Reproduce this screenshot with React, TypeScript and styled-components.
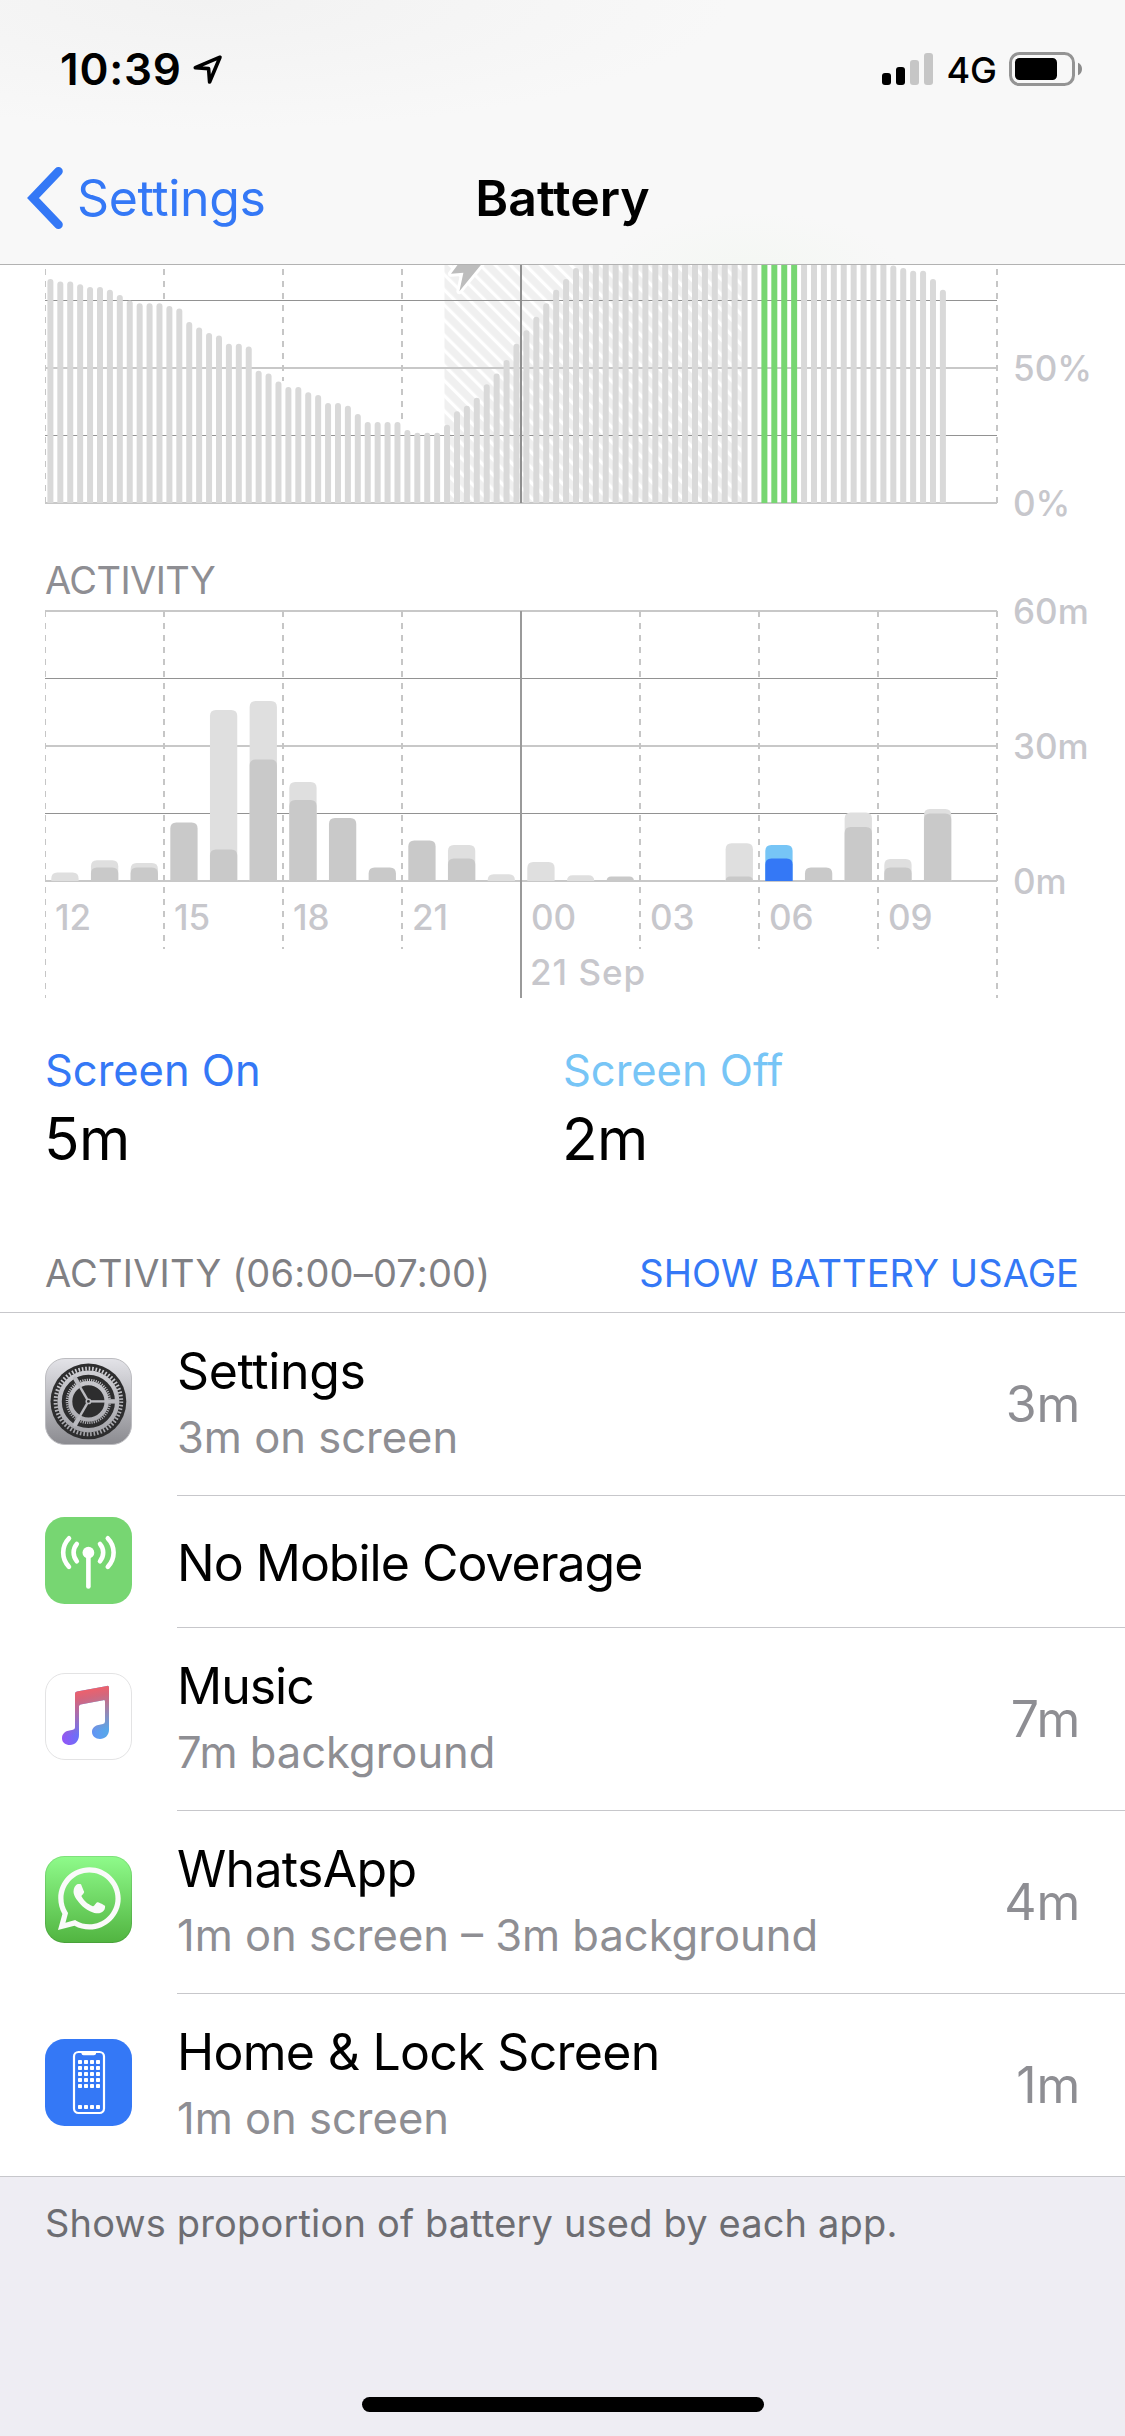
import React from 'react';
import styled, { createGlobalStyle } from 'styled-components';
import { FaWhatsapp } from 'react-icons/fa';

const BLUE = '#3478f6';
const SKY = '#77c5f6';
const GREEN = '#77d672';
const LABEL = '#c7c7cc';
const GREY = '#8e8e93';
const SEPARATOR = '#c7c7cb';

const GlobalStyle = createGlobalStyle`
  *, *::before, *::after { box-sizing: border-box; }
  body {
    margin: 0;
    background: #eeedf3;
    font-family: Inter, "Liberation Sans", sans-serif;
  }
`;

const Screen = styled.main`
  display: flex;
  flex-direction: column;
  width: 1125px;
  height: 2436px;
  overflow: hidden;
  color: #000;
  background: #eeedf3;
`;

/* ---------- Header ---------- */

const Header = styled.header`
  flex: none;
  height: 265px;
  border-bottom: 1px solid #b2b2b2;
  background:
    radial-gradient(ellipse 150px 60px at 752px 272px, #f4f7f3, transparent),
    radial-gradient(ellipse 520px 130px at 210px 0px, #f2f2f2, transparent),
    #f8f8f8;
`;

const StatusBar = styled.div`
  display: flex;
  align-items: center;
  justify-content: space-between;
  height: 132px;
  padding: 6px 43px 0 60px;
`;

const StatusGroup = styled.div`
  display: flex;
  align-items: center;
`;

const Clock = styled.span`
  font-size: 44px;
  font-weight: 600;
  line-height: 52px;
  letter-spacing: 0.8px;
  margin-right: 10px;
`;

const Network = styled.span`
  font-size: 36px;
  font-weight: 450;
  line-height: 44px;
  margin: 2px 12px 0 13px;
`;

const Signal = styled.div`
  display: flex;
  align-items: flex-end;
  gap: 5px;
  height: 32px;
`;

const SignalBar = styled.i<{ $height: number; $on: boolean }>`
  width: 9px;
  height: ${(p) => p.$height}px;
  border-radius: 3px;
  background: ${(p) => (p.$on ? '#000' : '#c6c6c6')};
`;

const NavBar = styled.nav`
  display: grid;
  grid-template-columns: 1fr auto 1fr;
  align-items: center;
  height: 132px;
  padding: 0 26px;
`;

const BackButton = styled.button`
  display: flex;
  align-items: center;
  gap: 13px;
  padding: 0;
  border: 0;
  background: none;
  color: ${BLUE};
  font: 400 50px/60px Inter, "Liberation Sans", sans-serif;
  letter-spacing: -0.35px;
`;

const NavTitle = styled.h1`
  margin: 0;
  font-size: 50px;
  font-weight: 600;
  line-height: 60px;
`;

/* ---------- Charts ---------- */

const Panel = styled.section`
  flex: none;
  height: 1047px;
  padding-left: 45px;
  background: #fff;
`;

const ChartRow = styled.div`
  display: flex;
  gap: 15px;
`;

const Plot = styled.svg`
  display: block;
  flex: none;
`;

const Scale = styled.div<{ $top: number; $height: number }>`
  display: flex;
  flex-direction: column;
  justify-content: space-between;
  height: ${(p) => p.$height}px;
  margin-top: ${(p) => p.$top}px;
  color: ${LABEL};
  font-size: 35px;
  font-weight: 450;
  line-height: 44px;
`;

const ChartTitle = styled.h2`
  margin: 32px 0 0;
  color: ${GREY};
  font-size: 38px;
  font-weight: 400;
  line-height: 46px;
  letter-spacing: -0.6px;
`;

const PlotStack = styled.div`
  display: grid;
  > * { grid-area: 1 / 1; }
`;

const TimeAxis = styled.div`
  padding-top: 292px;
  color: ${LABEL};
  font-size: 35px;
  font-weight: 450;
  line-height: 44px;
`;

const Hours = styled.div`
  display: grid;
  grid-template-columns: repeat(8, 119px);
`;

const Hour = styled.span`
  padding-left: 10px;
`;

const Day = styled.div`
  margin: 11px 0 0 485px;
  letter-spacing: 1px;
`;

const Legend = styled.div`
  display: grid;
  grid-template-columns: 518px 1fr;
  margin-top: 46px;
`;

const LegendName = styled.div<{ $color: string }>`
  color: ${(p) => p.$color};
  font-size: 43.5px;
  line-height: 52px;
  letter-spacing: -0.05px;
`;

const LegendValue = styled.div`
  margin: 8px 0 0 -1px;
  font-size: 58.5px;
  line-height: 70px;
  letter-spacing: -0.6px;
`;

const ListHeader = styled.div`
  display: flex;
  justify-content: space-between;
  margin-top: 75px;
  padding: 0 46px 0 0;
  font-size: 38px;
  line-height: 48px;
  letter-spacing: 0.19px;
  color: #808084;
`;

const Toggle = styled.span`
  color: ${BLUE};
  letter-spacing: 0.08px;
`;

/* ---------- App list ---------- */

const List = styled.ul`
  flex: none;
  margin: 0;
  padding: 0;
  list-style: none;
  background: #fff;
  border-top: 1px solid ${SEPARATOR};
  border-bottom: 1px solid ${SEPARATOR};
`;

const Row = styled.li<{ $compact: boolean }>`
  display: flex;
  height: ${(p) => (p.$compact ? 132 : 183)}px;
  padding-left: 45px;
  &:last-child { height: 182px; }
`;

const IconSlot = styled.div<{ $compact: boolean }>`
  flex: none;
  width: 132px;
  padding-top: ${(p) => (p.$compact ? 21 : 45)}px;
`;

const RowBody = styled.div`
  display: flex;
  flex: 1;
  align-items: center;
  justify-content: space-between;
  padding-right: 45px;
  border-bottom: 1px solid ${SEPARATOR};
  ${Row}:last-child & { border-bottom: 0; }
`;

const RowText = styled.div<{ $compact: boolean }>`
  display: flex;
  flex-direction: column;
  gap: 10px;
  ${(p) => (p.$compact ? 'padding-top: 2px' : 'padding-bottom: 4px')};
`;

const AppName = styled.span<{ $tracking: number }>`
  font-size: 50px;
  line-height: 60px;
  letter-spacing: ${(p) => p.$tracking}px;
`;

const AppDetail = styled.span`
  color: ${GREY};
  font-size: 43.5px;
  line-height: 52px;
`;

const AppTime = styled.span`
  color: ${GREY};
  font-size: 50px;
  line-height: 60px;
  letter-spacing: -0.2px;
`;

const Footnote = styled.p`
  margin: 22px 0 0;
  padding-left: 45px;
  color: #6d6d72;
  font-size: 38px;
  line-height: 48px;
  letter-spacing: 0.17px;
`;

const HomeIndicator = styled.div`
  width: 402px;
  height: 15px;
  margin: auto auto 24px;
  border-radius: 8px;
  background: #000;
`;

/* ---------- Data ---------- */

const LEVELS = [
  83, 82, 82, 81, 80, 80, 79, 77, 75, 74, 74, 74, 73, 72, 67, 65, 63, 62, 59, 59, 58, 49, 48, 45,
  43, 43, 41, 40, 37, 37, 36, 33, 30, 30, 30, 30, 27, 26, 26, 26, 29, 34, 36, 39, 44, 48, 53, 59,
  64, 69, 74, 79, 83, 87, 91, 94, 96, 98, 99, 100, 100, 100, 100, 100, 100, 100, 100, 100, 100,
  100, 100, 100, 100, 100, 100, 100, 99, 98, 96, 95, 93, 92, 91, 90, 89, 88, 87, 86, 86, 83, 79,
];

/* [minutes in total, minutes with the screen on] for each hour from 12:00 */
const ACTIVITY: [number, number][] = [
  [1.9, 0], [4.6, 3], [4, 3], [13, 13], [38, 7], [40, 27], [22, 18], [14, 14], [3, 3], [9, 9],
  [8, 5], [1.5, 0], [4.2, 0], [1.3, 0], [1, 1], [0, 0], [0, 0], [8.4, 1], [8, 5], [3, 3],
  [15.2, 12], [4.9, 3], [16, 15],
];

const HOURS = ['12', '15', '18', '21', '00', '03', '06', '09'];
const PLOT_WIDTH = 953;
const QUARTER = 119 / 12;
const HOUR_WIDTH = 119 / 3;
const SELECTED_HOUR = 18;

const levelTop = (percent: number) => 238 - percent * 2.7;

/* How far each three-hour tick is visible above the level bars. */
const LEVEL_TICKS = [
  { x: 0.5, width: 1, end: 238 },
  { x: 119, width: 2, end: 34 },
  { x: 238, width: 2, end: 116 },
  { x: 357, width: 2, end: 154 },
  { x: 952, width: 2, end: 238 },
];

const roundedTop = (x: number, y: number, w: number, bottom: number, radius: number) => {
  const r = Math.min(radius, bottom - y);
  return `M${x} ${bottom}V${y + r}Q${x} ${y} ${x + r} ${y}H${x + w - r}Q${x + w} ${y} ${x + w} ${y + r}V${bottom}Z`;
};

const GridLines = ({ rows }: { rows: { y: number; major: boolean }[] }) => (
  <g>
    {rows.map((r) => (
      <rect key={r.y} x="0" y={r.y} width={PLOT_WIDTH - 1} height={r.major ? 2 : 1} fill={r.major ? '#c8c8c8' : '#929292'} />
    ))}
  </g>
);

const BOLT = 'M414 -2L406 8.8L418.4 7.8L414.4 26.2L437.5 -2Z';

const LevelChart = () => (
  <Plot width={PLOT_WIDTH} height={260} viewBox={`0 0 ${PLOT_WIDTH} 260`}>
    <defs>
      <pattern id="charging" width="10.7" height="10.7" patternUnits="userSpaceOnUse" patternTransform="translate(400 48.3) rotate(45)">
        <rect width="10.7" height="10.7" fill="#f0f0f0" />
        <rect y="3.6" width="10.7" height="3.3" fill="#fff" />
      </pattern>
    </defs>
    <rect x="399.5" y="0" width="297" height="238" fill="url(#charging)" />
    <GridLines rows={[{ y: 35, major: false }, { y: 102, major: true }, { y: 170, major: false }, { y: 237, major: true }]} />
    {LEVEL_TICKS.map((t) => (
      <line key={t.x} x1={t.x} x2={t.x} y1="4" y2={t.end} stroke="#c6c6c6" strokeWidth={t.width} strokeDasharray="6 6" />
    ))}
    <rect x="475" y="0" width="2" height="238" fill="#8f8f8f" />
    {LEVELS.map((level, i) => (
      <path
        key={i}
        d={roundedTop(2.4 + i * QUARTER, levelTop(level), 6, 238, 3)}
        fill={i >= 72 && i < 76 ? GREEN : '#d9d9d9'}
      />
    ))}
    <path d={BOLT} fill="#fff" stroke="#fff" strokeWidth="6" strokeLinejoin="round" />
    <path d={BOLT} fill="#bdbdbd" />
  </Plot>
);

const ActivityChart = () => (
  <Plot width={PLOT_WIDTH} height={395} viewBox={`0 0 ${PLOT_WIDTH} 395`}>
    <GridLines
      rows={[
        { y: 7, major: true },
        { y: 75, major: false },
        { y: 142, major: true },
        { y: 210, major: false },
        { y: 277, major: true },
      ]}
    />
    {HOURS.concat('end').map((h, i) => {
      const edge = i === 0 || i === 8;
      return i === 4 ? (
        <rect key={h} x="475" y="8" width="2" height="387" fill="#9a9a9a" />
      ) : (
        <line
          key={h}
          x1={i === 0 ? 0.5 : i * 119}
          x2={i === 0 ? 0.5 : i * 119}
          y1="8"
          y2={edge ? 395 : 346}
          stroke="#c6c6c6"
          strokeWidth={i === 0 ? 1 : 2}
          strokeDasharray="6 6"
        />
      );
    })}
    {ACTIVITY.map(([total, on], i) => {
      const x = 6.3 + i * HOUR_WIDTH;
      const selected = i === SELECTED_HOUR;
      return (
        <g key={i}>
          {total > on && <path d={roundedTop(x, 278 - total * 4.5, 27.3, 278, 6)} fill={selected ? SKY : '#dfdfdf'} />}
          {on > 0 && <path d={roundedTop(x, 278 - on * 4.5, 27.3, 278, 6)} fill={selected ? BLUE : '#c9c9c9'} />}
        </g>
      );
    })}
  </Plot>
);

/* ---------- Icons ---------- */

const IconSvg = styled.svg`
  display: block;
  width: 87px;
  height: 87px;
`;

const SettingsIcon = () => (
  <IconSvg viewBox="0 0 87 87">
    <defs>
      <linearGradient id="steel" x1="0" y1="0" x2="0" y2="1">
        <stop offset="0" stopColor="#e3e3e8" />
        <stop offset="1" stopColor="#8b8b90" />
      </linearGradient>
      <linearGradient id="rim" gradientUnits="userSpaceOnUse" x1="0" y1="6" x2="0" y2="82">
        <stop offset="0" stopColor="#d3d3d8" />
        <stop offset="1" stopColor="#a0a0a5" />
      </linearGradient>
    </defs>
    <rect x="0.5" y="0.5" width="86" height="86" rx="19.5" fill="url(#steel)" stroke="#bcbcc0" />
    <circle cx="43.4" cy="43.4" r="37.9" fill="#2d2d2e" />
    <g fill="none" stroke="url(#rim)">
      <circle cx="43.4" cy="43.4" r="32.8" strokeWidth="4" strokeDasharray="1.6 1.835" />
      <circle cx="43.4" cy="43.4" r="28.8" strokeWidth="4.4" />
      <circle cx="43.4" cy="43.4" r="21.4" strokeWidth="2.6" strokeDasharray="1.1 1.14" />
      <circle cx="43.4" cy="43.4" r="18.2" strokeWidth="4.2" />
      {[0, 120, 240].map((a) => (
        <g key={a} transform={`rotate(${a} 43.4 43.4)`}>
          <path d="M46 43.4H72" strokeWidth="2.4" />
          <path d="M63 43.4H71" strokeWidth="4.4" />
        </g>
      ))}
      <circle cx="43.4" cy="43.4" r="2.2" strokeWidth="1.5" />
    </g>
  </IconSvg>
);

const CoverageIcon = () => (
  <IconSvg viewBox="0 0 87 87">
    <rect width="87" height="87" rx="19.5" fill={GREEN} />
    <g fill="none" stroke="#fff" strokeWidth="4.6" strokeLinecap="round">
      <path d="M43.4 36V69.4" />
      <path d="M31.8 27A13.2 13.2 0 0 0 31.8 44.2" />
      <path d="M55 27A13.2 13.2 0 0 1 55 44.2" />
      <path d="M24 21.3A20.5 20.5 0 0 0 24 49.9" />
      <path d="M62.8 21.3A20.5 20.5 0 0 1 62.8 49.9" />
    </g>
    <circle cx="43.4" cy="35.7" r="5.9" fill="#fff" />
  </IconSvg>
);

const NOTE =
  'M30 21Q30 19 32 18.6L62 12.9Q64 12.6 64 14.5V57C64 62 60 66 55 66C50.5 66 47 63 47 59C47 55 50 52.5 53.5 52L58 51Q60 50.6 60 48.5V28.5Q60 26.8 58.3 27.2L35.5 31.6Q34 32 34 33.5V62C34 68 30 72 25 72C20.5 72 17 69.5 17 65.2C17 61 20 58.5 23.5 57.8L28 56.8Q30 56.3 30 54.5Z';

const MusicIcon = () => (
  <IconSvg viewBox="0 0 87 87">
    <defs>
      <linearGradient id="noteBase" gradientUnits="userSpaceOnUse" x1="17" y1="66" x2="60" y2="56">
        <stop offset="0" stopColor="#9355f6" />
        <stop offset="0.35" stopColor="#6c70f8" />
        <stop offset="0.8" stopColor="#5f9cf2" />
        <stop offset="1" stopColor="#58a6ea" />
      </linearGradient>
      <linearGradient id="noteTop" gradientUnits="userSpaceOnUse" x1="36" y1="17" x2="44" y2="60">
        <stop offset="0" stopColor="#f0606a" />
        <stop offset="0.2" stopColor="#e2606f" stopOpacity="0.9" />
        <stop offset="1" stopColor="#e2606f" stopOpacity="0" />
      </linearGradient>
    </defs>
    <rect x="0.5" y="0.5" width="86" height="86" rx="19.5" fill="#fff" stroke="#e3e3e4" />
    <path d={NOTE} fill="url(#noteBase)" />
    <path d={NOTE} fill="url(#noteTop)" />
  </IconSvg>
);

const WhatsAppIcon = () => (
  <IconSvg viewBox="0 0 87 87">
    <defs>
      <linearGradient id="leaf" x1="0" y1="0" x2="0" y2="1">
        <stop offset="0" stopColor="#8ffb8b" />
        <stop offset="1" stopColor="#51b440" />
      </linearGradient>
    </defs>
    <rect width="87" height="87" rx="19.5" fill="url(#leaf)" />
    <rect x="0.5" y="0.5" width="86" height="86" rx="19" fill="none" stroke="#000" strokeOpacity="0.1" />
    <FaWhatsapp x="8.5" y="6.8" size={71.7} color="#fafafa" />
  </IconSvg>
);

const HomeScreenIcon = () => (
  <IconSvg viewBox="0 0 87 87">
    <rect width="87" height="87" rx="19.5" fill={BLUE} />
    <rect x="29" y="13" width="30" height="61" rx="4.5" fill="none" stroke="#fff" strokeWidth="2.2" />
    <path d="M36.5 13H51V14.2Q51 16.2 49 16.2H38.5Q36.5 16.2 36.5 14.2Z" fill="#fff" />
    {[21, 27, 33, 39, 45, 66].map((y) =>
      [33, 39, 45, 51].map((x) => <rect key={`${x}-${y}`} x={x} y={y} width="4" height="4" rx="0.8" fill="#fff" />),
    )}
  </IconSvg>
);

const BatteryGlyph = () => (
  <svg width="73" height="34" viewBox="0 0 73 34">
    <rect x="1.5" y="1.5" width="63" height="31" rx="9" fill="none" stroke="#949494" strokeWidth="3" />
    <rect x="6" y="6" width="42" height="22" rx="4.5" fill="#000" />
    <path d="M69 10.7Q73 12.5 73 17Q73 21.5 69 23.3Z" fill="#8c8c8c" />
  </svg>
);

const APPS = [
  { name: 'Settings', detail: '3m on screen', time: '3m', tracking: -0.37, Icon: SettingsIcon },
  { name: 'No Mobile Coverage', tracking: -1, Icon: CoverageIcon },
  { name: 'Music', detail: '7m background', time: '7m', tracking: -1, Icon: MusicIcon },
  { name: 'WhatsApp', detail: '1m on screen – 3m background', time: '4m', tracking: -0.7, Icon: WhatsAppIcon },
  { name: 'Home & Lock Screen', detail: '1m on screen', time: '1m', tracking: -0.7, Icon: HomeScreenIcon },
];

export default function App() {
  return (
    <Screen>
      <GlobalStyle />
      <Header>
        <StatusBar>
          <StatusGroup>
            <Clock>10:39</Clock>
            <svg width="31" height="31" viewBox="0 0 31 31">
              <path d="M28 3.2L3.3 13.7L16.6 14.6L17.6 28Z" fill="none" stroke="#000" strokeWidth="3.6" strokeLinejoin="round" />
            </svg>
          </StatusGroup>
          <StatusGroup>
            <Signal>
              {[12, 18, 25, 32].map((h, i) => (
                <SignalBar key={h} $height={h} $on={i < 2} />
              ))}
            </Signal>
            <Network>4G</Network>
            <BatteryGlyph />
          </StatusGroup>
        </StatusBar>
        <NavBar>
          <BackButton>
            <svg width="38" height="64" viewBox="0 0 38 64">
              <path d="M32.5 5.3L7 32L32.5 58.7" fill="none" stroke={BLUE} strokeWidth="8.6" strokeLinecap="round" strokeLinejoin="miter" />
            </svg>
            Settings
          </BackButton>
          <NavTitle>Battery</NavTitle>
        </NavBar>
      </Header>

      <Panel>
        <ChartRow>
          <LevelChart />
          <Scale $top={81} $height={179}>
            <span>50%</span>
            <span>0%</span>
          </Scale>
        </ChartRow>
        <ChartTitle>ACTIVITY</ChartTitle>
        <ChartRow>
          <PlotStack>
            <ActivityChart />
            <TimeAxis>
              <Hours>
                {HOURS.map((h) => (
                  <Hour key={h}>{h}</Hour>
                ))}
              </Hours>
              <Day>21 Sep</Day>
            </TimeAxis>
          </PlotStack>
          <Scale $top={-14} $height={314}>
            <span>60m</span>
            <span>30m</span>
            <span>0m</span>
          </Scale>
        </ChartRow>
        <Legend>
          <div>
            <LegendName $color={BLUE}>Screen On</LegendName>
            <LegendValue>5m</LegendValue>
          </div>
          <div>
            <LegendName $color={SKY}>Screen Off</LegendName>
            <LegendValue>2m</LegendValue>
          </div>
        </Legend>
        <ListHeader>
          <span>ACTIVITY (06:00–07:00)</span>
          <Toggle>SHOW BATTERY USAGE</Toggle>
        </ListHeader>
      </Panel>

      <List>
        {APPS.map(({ name, detail, time, tracking, Icon }) => (
          <Row key={name} $compact={!detail}>
            <IconSlot $compact={!detail}>
              <Icon />
            </IconSlot>
            <RowBody>
              <RowText $compact={!detail}>
                <AppName $tracking={tracking}>{name}</AppName>
                {detail && <AppDetail>{detail}</AppDetail>}
              </RowText>
              {time && <AppTime>{time}</AppTime>}
            </RowBody>
          </Row>
        ))}
      </List>
      <Footnote>Shows proportion of battery used by each app.</Footnote>
      <HomeIndicator />
    </Screen>
  );
}
